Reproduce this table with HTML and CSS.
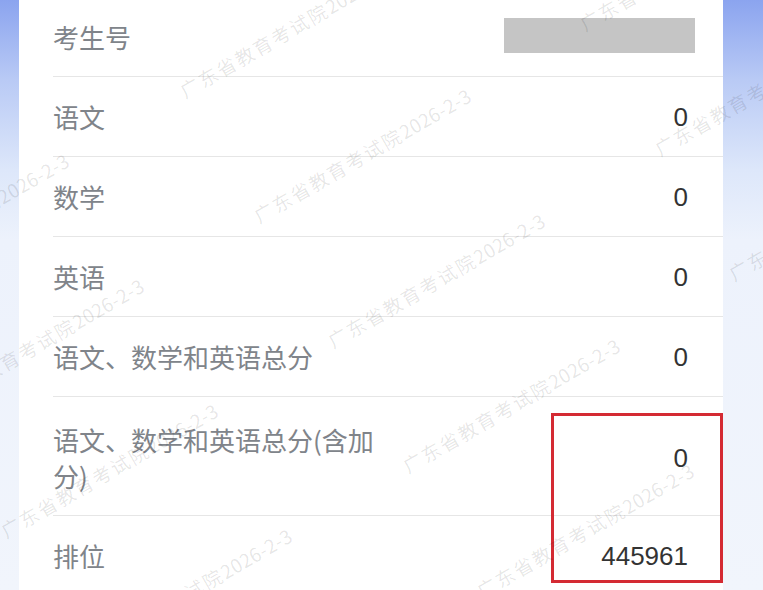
FILE: index.html
```html
<!DOCTYPE html>
<html lang="zh-CN">
<head>
<meta charset="utf-8">
<title>成绩查询</title>
<link rel="stylesheet" href="styles.css">
</head>
<body>
<main class="card">
  <div class="row">
    <div class="label">考生号</div>
    <div class="value"><span class="redact"></span></div>
  </div>
  <div class="row">
    <div class="label">语文</div>
    <div class="value">0</div>
  </div>
  <div class="row">
    <div class="label">数学</div>
    <div class="value">0</div>
  </div>
  <div class="row">
    <div class="label">英语</div>
    <div class="value">0</div>
  </div>
  <div class="row">
    <div class="label">语文、数学和英语总分</div>
    <div class="value">0</div>
  </div>
  <div class="row row-tall">
    <div class="label">语文、数学和英语总分(含加分)</div>
    <div class="value">0</div>
  </div>
  <div class="row row-last">
    <div class="label">排位</div>
    <div class="value">445961</div>
  </div>
</main>

<div class="highlight"></div>

<div class="watermarks">
  <span class="wm" style="left:-148px;top:265px">广东省教育考试院<span class="wm-date">2026-2-3</span></span>
  <span class="wm" style="left:-73px;top:390px">广东省教育考试院<span class="wm-date">2026-2-3</span></span>
  <span class="wm" style="left:1px;top:515px">广东省教育考试院<span class="wm-date">2026-2-3</span></span>
  <span class="wm" style="left:75px;top:640px">广东省教育考试院<span class="wm-date">2026-2-3</span></span>
  <span class="wm" style="left:180px;top:75px">广东省教育考试院<span class="wm-date">2026-2-3</span></span>
  <span class="wm" style="left:254px;top:200px">广东省教育考试院<span class="wm-date">2026-2-3</span></span>
  <span class="wm" style="left:328px;top:325px">广东省教育考试院<span class="wm-date">2026-2-3</span></span>
  <span class="wm" style="left:403px;top:450px">广东省教育考试院<span class="wm-date">2026-2-3</span></span>
  <span class="wm" style="left:477px;top:575px">广东省教育考试院<span class="wm-date">2026-2-3</span></span>
  <span class="wm" style="left:580px;top:8px">广东省教育考试院<span class="wm-date">2026-2-3</span></span>
  <span class="wm" style="left:655px;top:133px">广东省教育考试院<span class="wm-date">2026-2-3</span></span>
  <span class="wm" style="left:729px;top:258px">广东省教育考试院<span class="wm-date">2026-2-3</span></span>
</div>
</body>
</html>
```

FILE: styles.css
```css
html, body {
  margin: 0;
  padding: 0;
}

body {
  width: 763px;
  height: 590px;
  overflow: hidden;
  position: relative;
  background: linear-gradient(180deg, #8ba4ef 0px, #b9caf5 80px, #dde7fa 170px, #edf2fc 240px, #f1f5fc 100%);
  font-family: "Noto Sans CJK SC", "Noto Sans", sans-serif;
}

.card {
  margin: -3px 0 0 19px;
  width: 704px;
  height: 593px;
  background: #ffffff;
  overflow: hidden;
}

.row {
  margin-left: 34px;
  padding: 22px 35px 21px 0;
  border-bottom: 1px solid #e6e6e6;
  display: flex;
  justify-content: space-between;
  align-items: center;
}

.row-tall {
  padding-top: 25px;
  padding-bottom: 21px;
}

.row-last {
  padding-bottom: 0;
  border-bottom: none;
}

.label {
  font-size: 26px;
  line-height: 36px;
  color: #80848a;
  max-width: 330px;
}

.value {
  font-family: "Liberation Sans", Arial, sans-serif;
  font-size: 26px;
  line-height: 36px;
  color: #333333;
  display: flex;
  align-items: center;
}

.redact {
  display: block;
  width: 191px;
  height: 35px;
  margin-right: -7px;
  margin-top: -3px;
  background: #c5c5c5;
}

.highlight {
  position: absolute;
  left: 551px;
  top: 413px;
  width: 166px;
  height: 164px;
  border: 3px solid #d42a33;
  pointer-events: none;
}

.watermarks {
  position: absolute;
  inset: 0;
  pointer-events: none;
  overflow: hidden;
}

.wm {
  position: absolute;
  white-space: nowrap;
  font-family: "Noto Sans CJK SC", "Liberation Sans", sans-serif;
  font-size: 19px;
  line-height: 24px;
  letter-spacing: 2px;
  color: rgba(0, 0, 0, 0.1);
  transform-origin: 10px 12px;
  transform: rotate(-30deg);
}

.wm-date {
  letter-spacing: 0.3px;
}
```
